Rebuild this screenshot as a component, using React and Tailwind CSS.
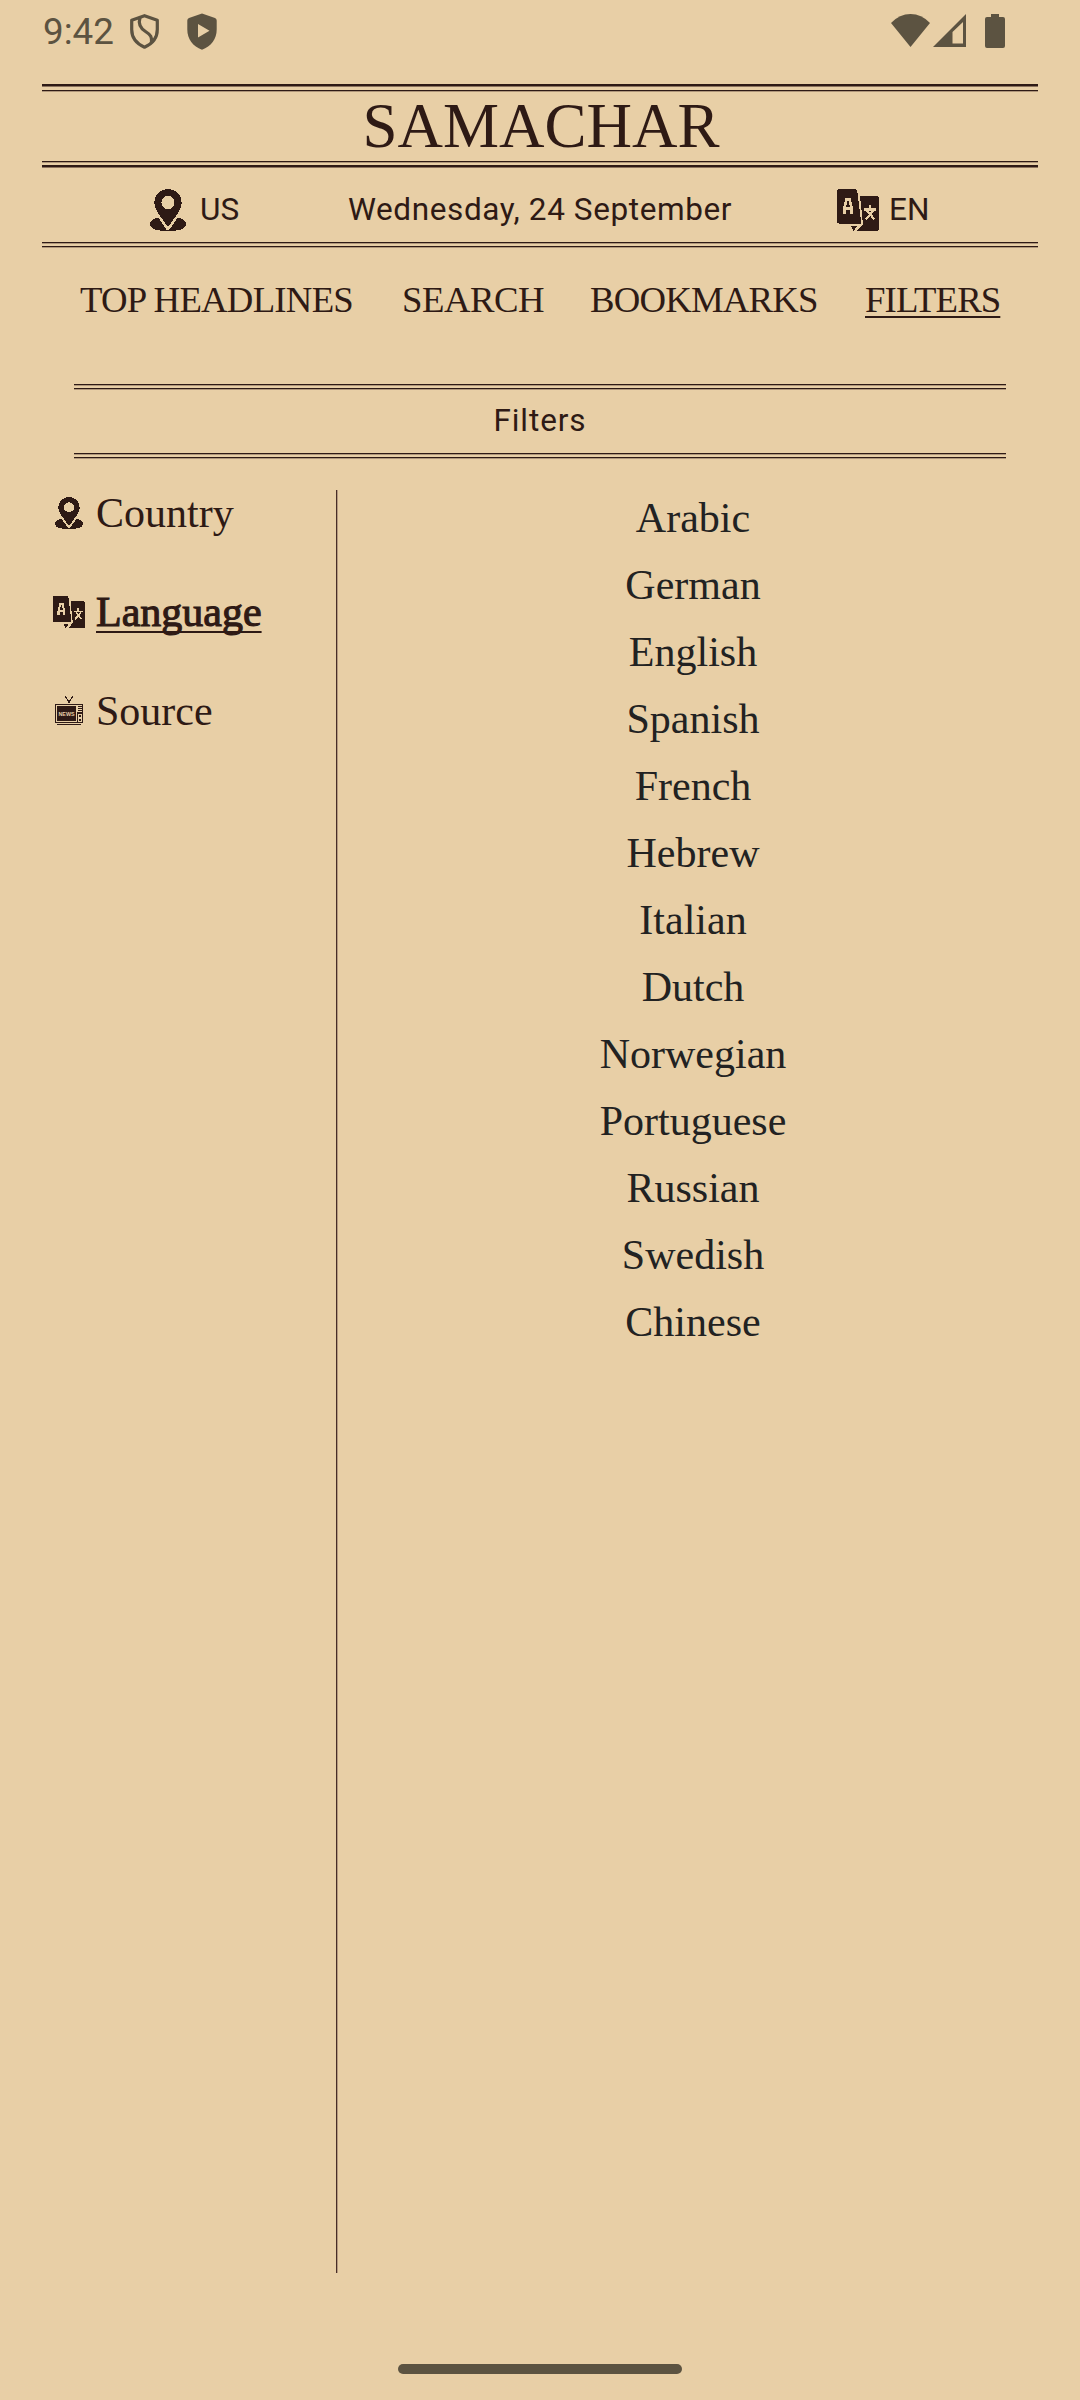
const SERIF = "font-['Liberation_Serif','Times_New_Roman',serif]";
const SANS = "font-['Roboto',sans-serif]";

const nav = [
  { label: 'TOP HEADLINES', cls: 'w-[322px] tracking-[-0.75px]' },
  { label: 'SEARCH', cls: 'w-[188px] tracking-[-0.5px]' },
  { label: 'BOOKMARKS', cls: 'w-[275px] tracking-[-0.8px]' },
  { label: 'FILTERS', cls: 'tracking-[-0.9px]', active: true },
];

const languages = [
  'Arabic', 'German', 'English', 'Spanish', 'French', 'Hebrew', 'Italian',
  'Dutch', 'Norwegian', 'Portuguese', 'Russian', 'Swedish', 'Chinese',
];

function HeavyRule() {
  return (
    <div className="h-[3px]">
      <div className="h-[2px] bg-[#2e1a15]" />
      <div className="h-px bg-[#8b725d]" />
    </div>
  );
}

function ThinRule() {
  return (
    <div className="h-[2px]">
      <div className="h-px bg-[#2e1a15]" />
      <div className="h-px bg-[#af967a]" />
    </div>
  );
}

function DoubleRule() {
  return (
    <div className="flex h-[6px] flex-col justify-between">
      <ThinRule />
      <ThinRule />
    </div>
  );
}

function PinIcon({ className }) {
  return (
    <svg className={className} viewBox="0 0 36 42" preserveAspectRatio="none" shapeRendering="crispEdges" fill="#2e1a15">
      <path d="M9 28.500Q0 30 0 35Q0 42 18 42T36 35Q36 30 27 28.500Z" />
      <path d="M6 25L16.500 40.500H19.500L30 25Z" fill="#e8cfa6" />
      <path
        fillRule="evenodd"
        d="M18 0C10 0 4.300 6 4.300 13.500C4.300 18 6.500 21.500 9 25.500L16.500 36Q18 38 19.500 36L27 25.500C29.500 21.500 31.700 18 31.700 13.500C31.700 6 26 0 18 0ZM18 7A6.500 6.500 0 1 1 18 20A6.500 6.500 0 1 1 18 7Z"
      />
    </svg>
  );
}

function TranslateIcon({ className }) {
  return (
    <svg className={className} viewBox="0 0 42 42" shapeRendering="crispEdges" fill="#2e1a15">
      <path d="M2.500 0H17.500Q20 0 20.300 2.500L24.300 34.700H3Q0 34.700 0 31.700V2.500Q0 0 2.500 0Z" />
      <path d="M23 7H39.500Q42 7 42 9.500V39.500Q42 42 39.500 42H20L26 35.500Z" />
      <path d="M14 37H20.500L16.500 42Z" />
      <g fill="none" stroke="#e8cfa6" strokeWidth="2.800">
        <path d="M7.300 24.500V19.500L9.500 10.500H12.500L14.700 19.500V24.500M8 19.500H14" />
        <path d="M27 20.500H39M33 16V20M30 21.500L37.500 30.500M36.500 21.500L29 30.500" strokeWidth="2.200" />
      </g>
    </svg>
  );
}

function TvIcon({ className }) {
  return (
    <svg className={className} viewBox="0 0 28 29" shapeRendering="crispEdges" fill="#2e1a15">
      <path d="M10 0h1v1h1v2h1v1h2v-1h1v-2h1v-1h1v2h-1v1h-1v2h-1v2h-2v-2h-1v-2h-1v-1h-1z" />
      <path d="M0 8H28V27H0ZM2 28H26V29H2Z" />
      <path d="M1.500 9.500H21.500V25.500H1.500Z" fill="none" stroke="#e8cfa6" />
      <path d="M23 9H27V10H23ZM23 11H27V12H23ZM23 13H27V14H23ZM23 15H27V16H23ZM22 9H23V16H22Z" fill="#e8cfa6" />
      <path d="M23.500 18.500H26.500V21.500H23.500ZM23.500 22.500H26.500V25.500H23.500Z" fill="none" stroke="#e8cfa6" />
      <text x="3.500" y="19.500" fontSize="5.500" fontWeight="700" fontFamily="Liberation Sans, sans-serif" textLength="16" lengthAdjust="spacingAndGlyphs" fill="#e8cfa6">
        NEWS
      </text>
    </svg>
  );
}

function StatusBar() {
  return (
    <div className="flex h-[84px] items-start text-[#5c5341]">
      <span className={`ml-[43px] mt-[10px] w-[87px] text-[36.75px] leading-[43px] ${SANS}`}>9:42</span>
      <svg className="mt-[14px] h-[35px] w-[29px]" viewBox="0 0 29 35" fill="none" stroke="currentColor" strokeWidth="3.200" strokeLinejoin="round">
        <path d="M14.500 1.700L27.300 6.300V15.500C27.300 23.500 22.500 29.700 14.500 33.200C6.500 29.700 1.700 23.500 1.700 15.500V6.300Z" />
        <path d="M10 3.500C8 10 10 14 15.500 17.500C21 21 22 23 21.500 28.500" />
      </svg>
      <svg className="ml-[28px] mt-[13px] h-[37px] w-[30px]" viewBox="0 0 30 37">
        <path fillRule="evenodd" fill="currentColor" d="M15 .5L28 5Q29.700 5.700 29.700 7.500V16.500C29.700 26 24 33.500 15 36.700C6 33.500.3 26 .3 16.500V7.500Q.3 5.700 2 5ZM11 11V24.500L22.500 17.700Z" />
      </svg>
      <svg className="ml-[674px] mt-[14px] h-[33px] w-[39px]" viewBox="0 0 39 33">
        <path fill="currentColor" d="M0 9Q8.500 0 19.500 0T39 9L19.500 33Z" />
      </svg>
      <svg className="ml-[3px] mt-[14px] h-[33px] w-[33px]" viewBox="0 0 33 33">
        <path fillRule="evenodd" fill="currentColor" d="M33 0V33H0ZM30 8L19.500 18V29.500H30Z" />
      </svg>
      <svg className="ml-[19px] mt-[14px] h-[34px] w-[20px]" viewBox="0 0 20 34">
        <path fill="currentColor" d="M6 0H14V3H18Q20 3 20 5V32Q20 34 18 34H2Q0 34 0 32V5Q0 3 2 3H6Z" />
      </svg>
    </div>
  );
}

function Masthead() {
  return (
    <header className="mx-[42px] text-[#2e1a15]">
      <HeavyRule />
      <div className="mt-[3px]"><ThinRule /></div>
      <h1 className={`h-[69px] pl-[2px] text-center text-[63px] leading-[68px] ${SERIF}`}>SAMACHAR</h1>
      <ThinRule />
      <div className="mt-[2px]"><HeavyRule /></div>
      <div className={`flex h-[74px] items-center pt-[10px] text-[31.5px] ${SANS}`}>
        <PinIcon className="ml-[108px] h-[42px] w-[36px]" />
        <span className="ml-[14px] w-[148px]">US</span>
        <span className="w-[489px] whitespace-nowrap tracking-[0.6px]">Wednesday, 24 September</span>
        <TranslateIcon className="h-[42px] w-[42px]" />
        <span className="ml-[10px]">EN</span>
      </div>
      <DoubleRule />
    </header>
  );
}

function SideItem({ icon, label, active }) {
  return (
    <div className="flex h-[99px] items-start">
      <div className="flex w-[42px] justify-center pt-[1px]">{icon}</div>
      {active ? (
        <span className="ml-[6px] underline decoration-2 underline-offset-[5px] [text-decoration-skip-ink:none] [-webkit-text-stroke:1.1px_#2e1a15]">{label}</span>
      ) : (
        <span className="ml-[6px]">{label}</span>
      )}
    </div>
  );
}

export default function App() {
  return (
    <div className="flex h-[2400px] w-[1080px] flex-col overflow-hidden bg-[#e8cfa6]">
      <StatusBar />
      <Masthead />
      <nav className={`flex h-[136px] pl-[80px] pt-[31px] text-[36.75px] leading-[41px] text-[#2e1a15] ${SERIF}`}>
        {nav.map((n) => (
          <div key={n.label} className={`whitespace-nowrap ${n.cls}`}>
            <span className={n.active ? 'underline decoration-2 underline-offset-[4px]' : ''}>{n.label}</span>
          </div>
        ))}
      </nav>
      <section className="mx-[74px] text-[#2e1a15]">
        <DoubleRule />
        <div className={`h-[63px] pt-[10px] text-center text-[31.5px] leading-[42px] tracking-[0.9px] ${SANS}`}>Filters</div>
        <DoubleRule />
      </section>
      <main className="mt-[31px] flex h-[1783px]">
        <aside className={`-mt-px w-[336px] pl-[48px] text-[42px] leading-[48px] text-[#2e1a15] ${SERIF}`}>
          <SideItem label="Country" icon={<PinIcon className="mt-[7px] h-[32px] w-[28px]" />} />
          <SideItem label="Language" active icon={<TranslateIcon className="mt-[7px] h-[32px] w-[32px]" />} />
          <SideItem label="Source" icon={<TvIcon className="mt-[8px] h-[29px] w-[28px]" />} />
        </aside>
        <div className="w-px bg-[#472d27]" />
        <div className="w-px bg-[#b59a7f]" />
        <ul className={`-mt-[5px] ml-[1px] w-[708px] text-center text-[42px] leading-[67px] text-[#222222] ${SERIF}`}>
          {languages.map((l) => (
            <li key={l}>{l}</li>
          ))}
        </ul>
      </main>
      <div className="mx-auto mt-[91px] h-[10px] w-[284px] shrink-0 rounded-full bg-[#5c5341]" />
    </div>
  );
}
